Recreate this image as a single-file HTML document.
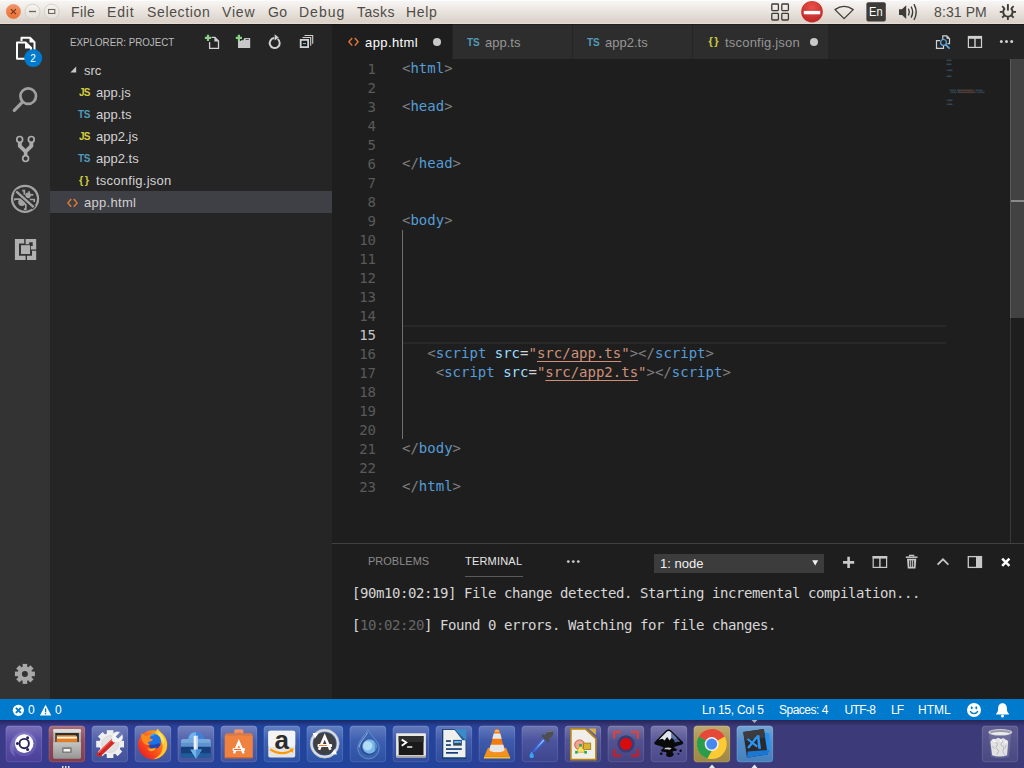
<!DOCTYPE html>
<html lang="en">
<head>
<meta charset="utf-8">
<title>app.html - project - Visual Studio Code</title>
<style>
*{box-sizing:border-box;margin:0;padding:0}
html,body{width:1024px;height:768px;overflow:hidden;background:#1e1e1e}
body{position:relative;font-family:"Liberation Sans",sans-serif;color:#ccc}
.a{position:absolute}
.t{position:absolute;white-space:pre;line-height:20px;height:20px}
svg{position:absolute;overflow:visible}
/* top panel */
#top{left:0;top:0;width:1024px;height:24px;background:linear-gradient(#fff 0,#f6f5f3 5%,#f3efec 20%,#e8e3dd 50%,#dad1c8 93%,#e5dbd2 97%)}
#top .t{font-size:14px;color:#4f4c47;top:2px;letter-spacing:0.4px}
.wb{position:absolute;top:4px;width:16px;height:16px;border-radius:50%}
/* activity bar */
#act{left:0;top:24px;width:50px;height:675px;background:#333}
#side{left:50px;top:24px;width:282px;height:675px;background:#252526}
#side .t{font-size:13px;color:#d2d2d2}
.row{position:absolute;left:0;width:282px;height:22px}
.ic{position:absolute;font-weight:bold;font-size:10px;line-height:22px;top:1px;white-space:pre}
#tabs{left:332px;top:24px;width:692px;height:35px;background:#252526}
.tab{position:absolute;top:0;height:35px;background:#2d2d2d}
.tab .t{font-size:13px;top:9px;color:#969696}
.tab .ic{line-height:35px}
#ed{left:332px;top:59px;width:692px;height:484px;background:#1e1e1e;font-family:"DejaVu Sans Mono","Liberation Mono",monospace;font-size:14px}
.ln{position:absolute;margin-top:1px;left:0;width:44px;text-align:right;color:#5a5a5a;line-height:19px;height:19px;white-space:pre}
.cl{position:absolute;left:70px;line-height:19px;height:19px;white-space:pre;color:#d4d4d4}
.g{color:#808080}.b{color:#569cd6}.at{color:#9cdcfe}.s{color:#ce9178}.u{text-decoration:underline;text-underline-offset:3px;text-decoration-thickness:1px;text-decoration-skip-ink:none}
#panel{left:332px;top:543px;width:692px;height:156px;background:#1e1e1e;border-top:1px solid #414141}
#panel .t{font-size:11px}
.term{position:absolute;left:20px;font-family:"DejaVu Sans Mono","Liberation Mono",monospace;font-size:14px;letter-spacing:-0.43px;line-height:16px;height:16px;white-space:pre;color:#d6d6d6}
#status{left:0;top:699px;width:1024px;height:21px;background:#007acc}
#status .t{font-size:12px;color:#fff;top:1px}
#dock{left:0;top:720px;width:1024px;height:48px;background:linear-gradient(90deg,#3a3a88 0,#363b90 60px,#2c4098 150px,#21449c 260px,#24439b 440px,#2d3f94 510px,#373b84 570px,#3c3a78 640px)}
.tile{position:absolute;top:6px;width:36px;height:36px;border-radius:3px;background:#4a4a8c;overflow:hidden}
</style>
</head>
<body>
<!-- ===== Ubuntu top panel ===== -->
<div id="top" class="a">

  <svg width="1024" height="24" viewBox="0 0 1024 24" style="left:0;top:0">
    <defs>
      <linearGradient id="gc" x1="0" y1="0" x2="0" y2="1"><stop offset="0" stop-color="#f29468"/><stop offset="1" stop-color="#ee6f2f"/></linearGradient>
      <linearGradient id="gb" x1="0" y1="0" x2="0" y2="1"><stop offset="0" stop-color="#f6f4f1"/><stop offset="1" stop-color="#e2ded8"/></linearGradient>
      <radialGradient id="gr" cx="0.5" cy="0.3" r="0.8"><stop offset="0" stop-color="#e8524a"/><stop offset="1" stop-color="#b81f1f"/></radialGradient>
    </defs>
    <!-- window buttons -->
    <circle cx="13.400" cy="11.600" r="7.200" fill="url(#gc)" stroke="#e08a62" stroke-width="0.600"/>
    <path d="M10.900 9.100l5 5M15.900 9.100l-5 5" stroke="#6e3a1c" stroke-width="1.200" fill="none"/>
    <circle cx="32.500" cy="11.600" r="7.500" fill="url(#gb)" stroke="#cfc8c0" stroke-width="0.800"/>
    <path d="M29 11.500h7" stroke="#6a645c" stroke-width="1.300"/>
    <circle cx="51.600" cy="11.600" r="7.500" fill="url(#gb)" stroke="#cfc8c0" stroke-width="0.800"/>
    <rect x="48.600" y="9.500" width="6.200" height="3.900" fill="#f6f4f1" stroke="#6a645c" stroke-width="1.100"/>
    <!-- grid -->
    <g fill="none" stroke="#3c3b38" stroke-width="1.3">
      <rect x="771.8" y="4" width="6.6" height="6.6" rx="0.8"/><rect x="781.8" y="4" width="6.6" height="6.6" rx="0.8"/>
      <rect x="771.8" y="13.4" width="6.6" height="6.6" rx="0.8"/><rect x="781.8" y="13.4" width="6.6" height="6.6" rx="0.8"/>
    </g>
    <!-- no entry -->
    <circle cx="812" cy="11.7" r="10.8" fill="url(#gr)"/>
    <rect x="803.8" y="10.9" width="16.4" height="3.4" fill="#fff"/>
    <!-- wifi outline -->
    <path d="M844.1 18.6L835 9.6Q844.1 3 853.2 9.6Z" fill="none" stroke="#3c3b38" stroke-width="1.3" stroke-linejoin="round"/>
    <!-- En -->
    <rect x="866.4" y="2.2" width="19.4" height="19.4" rx="2" fill="#3c3b38"/>
    <!-- speaker -->
    <path d="M899 9.2h3l4.2-4v13.8l-4.200-4h-3z" fill="#3c3b38"/>
    <g fill="none" stroke="#3c3b38" stroke-width="1.4" stroke-linecap="round">
      <path d="M908.6 9.2q1.500 2.900 0 5.800"/><path d="M911.300 7q2.700 5.100 0 10.200"/><path d="M914.200 4.700q4 7.400 0 14.800"/>
    </g>
    <!-- power gear -->
    <g transform="translate(1007.900 11.900)">
      <g fill="#3c3b38"><rect x="-0.900" y="-8.100" width="1.800" height="3" transform="rotate(45)"/><rect x="-0.900" y="-8.100" width="1.800" height="3" transform="rotate(90)"/><rect x="-0.900" y="-8.100" width="1.800" height="3" transform="rotate(135)"/><rect x="-0.900" y="-8.100" width="1.800" height="3" transform="rotate(180)"/><rect x="-0.900" y="-8.100" width="1.800" height="3" transform="rotate(225)"/><rect x="-0.900" y="-8.100" width="1.800" height="3" transform="rotate(270)"/><rect x="-0.900" y="-8.100" width="1.800" height="3" transform="rotate(315)"/></g>
      <path d="M-2.900 -3.700A4.700 4.700 0 1 0 2.900 -3.700" fill="none" stroke="#3c3b38" stroke-width="1.900"/>
      <rect x="-0.950" y="-7.800" width="1.900" height="6.500" fill="#3c3b38"/>
    </g>
  </svg>
  <div class="t" style="left:869.300px;top:2px;font-size:13.500px;color:#fff;letter-spacing:0;transform:scaleX(0.82);transform-origin:0 0">En</div>
  <div class="t" style="left:71px">File</div>
  <div class="t" style="left:107px;letter-spacing:0.8px">Edit</div>
  <div class="t" style="left:147px;letter-spacing:0.65px">Selection</div>
  <div class="t" style="left:222px;letter-spacing:0.8px">View</div>
  <div class="t" style="left:268px">Go</div>
  <div class="t" style="left:299px;letter-spacing:1px">Debug</div>
  <div class="t" style="left:357px">Tasks</div>
  <div class="t" style="left:406px;letter-spacing:0.7px">Help</div>
  <div class="t" style="left:934px;letter-spacing:0.1px">8:31 PM</div>
</div>
<!-- ===== Activity bar ===== -->
<div id="act" class="a">
  <svg width="50" height="675" viewBox="0 24 50 675" style="left:0;top:0">
    <!-- files -->
    <g fill="none" stroke="#fff" stroke-width="2" stroke-linejoin="round">
      <path d="M21.500 41v-3.200h8.500l4.500 4.500v11.200h-3"/>
      <path d="M17 42.600h8.800l5.200 5.200v11h-14z" fill="#333"/>
    </g>
    <path d="M25 42v6.500h6.500z" fill="#fff"/>
    <path d="M29.500 37.500v5h5z" fill="#fff"/>
    <circle cx="33.200" cy="58.100" r="9" fill="#007acc"/>
    <!-- search -->
    <circle cx="28.200" cy="96.100" r="7.800" fill="none" stroke="#a0a0a0" stroke-width="2.700"/>
    <path d="M22.400 102.200L14.300 110.300" stroke="#a0a0a0" stroke-width="3.300" stroke-linecap="round"/>
    <!-- git -->
    <path d="M17.900 142.300h3.900v3l3.800 3.700 3.800-3.700v-3h3.900v4.400l-5.900 5.700v3.600h-3.600v-3.600l-5.900-5.700z" fill="#acacac"/>
    <g fill="#333" stroke="#acacac" stroke-width="1.700">
      <circle cx="19.700" cy="139.400" r="2.900"/><circle cx="31.300" cy="139.400" r="2.900"/><circle cx="25.600" cy="158.600" r="2.900"/>
    </g>
    <!-- debug -->
    <g stroke="#a3a3a3" fill="none">
      <circle cx="25.050" cy="198.800" r="13" stroke-width="2.300"/>
      <g stroke-width="1.700">
        <path d="M22.300 190.700h2v4"/><path d="M14.900 200.500v-1.400h6.500"/><path d="M29.800 199.500h4.400v2.400"/><path d="M25.800 203.500v5.700h-1.900"/><path d="M30.200 194.800h3.200"/><path d="M28.800 191.300l0.800 2.200"/>
      </g>
      <circle cx="21.900" cy="202.300" r="3.700" fill="#a3a3a3" stroke="none"/>
      <circle cx="28" cy="195.400" r="2.800" fill="#a3a3a3" stroke="none"/>
      <path d="M15.600 190.800L34.300 207.800" stroke="#333" stroke-width="4.600"/>
      <path d="M16.200 191.400L33.700 207.200" stroke-width="2.400"/>
    </g>
    <!-- extensions -->
    <g fill="#b0b0b0">
      <path d="M14.900 238.900h9.300v4.600h-5.200v12.200h6.600v4.300h-10.700z"/>
      <path d="M25.600 238.900h10.600v10.700h-5.400v-3.700h1.900v-3.600h-3.500v1.900h-3.600z"/>
      <path d="M27 255.700h5v-4.900h4.200v9.200h-9.200z"/>
      <rect x="21" y="245.200" width="9" height="8.800"/>
    </g>
    <!-- gear -->
    <g transform="translate(24.900 673.900)" fill="#a8a8a8">
      <rect x="-2.300" y="-10" width="4.600" height="20"/><rect x="-2.300" y="-10" width="4.600" height="20" transform="rotate(45)"/><rect x="-2.300" y="-10" width="4.600" height="20" transform="rotate(90)"/><rect x="-2.300" y="-10" width="4.600" height="20" transform="rotate(135)"/>
      <circle r="7.300"/>
      <circle r="3" fill="#333"/>
    </g>
  </svg>
  <div class="t" style="left:30.200px;top:24.600px;font-size:10px;color:#fff;line-height:20px">2</div>
</div>
<!-- ===== Sidebar ===== -->
<div id="side" class="a">
  <svg width="282" height="675" viewBox="50 24 282 675" style="left:0;top:0">
    <!-- new file -->
    <path d="M209.600 42v6.400h8.900v-7.400l-3.600-3.600h-3.400" fill="none" stroke="#d0d0d0" stroke-width="1.300"/>
    <path d="M214.400 37v4.600h4.600z" fill="#d0d0d0"/>
    <path d="M204.900 37.900h6.200M208 34.800v6.200" stroke="#89d185" stroke-width="2.200"/>
    <!-- new folder -->
    <path d="M238 40.200h5.200l1.200-2.300h5.800v10h-12.200z" fill="#c8c8c8"/>
    <rect x="245.600" y="38.900" width="3.200" height="0.800" fill="#252526"/>
    <path d="M235.800 37.900h6.200M238.900 34.800v6.200" stroke="#252526" stroke-width="4"/>
    <path d="M235.800 37.900h6.200M238.900 34.800v6.200" stroke="#89d185" stroke-width="2.200"/>
    <!-- refresh -->
    <path d="M277.600 39a5 5 0 1 1-3.300-0.900" fill="none" stroke="#d0d0d0" stroke-width="2"/>
    <path d="M274.600 34.300l4.200 3.100-4.200 3.100z" fill="#d0d0d0"/>
    <!-- collapse all -->
    <path d="M304.500 35.500h8.200v8.200" fill="none" stroke="#d0d0d0" stroke-width="1.100"/>
    <path d="M302.500 37.500h8.200v8.200" fill="none" stroke="#d0d0d0" stroke-width="1.100"/>
    <rect x="300.700" y="39.900" width="7.400" height="7.200" fill="#1a1a1a" stroke="#d0d0d0" stroke-width="1.800"/>
    <rect x="303" y="43" width="3" height="1.100" fill="#5fc0f0"/>
    <!-- twistie -->
    <path d="M76.200 66.600v5.800h-5.800z" fill="#c8c8c8"/>
  </svg>
  <div class="t" style="left:20px;top:8px;font-size:11px;color:#bbb;transform:scaleX(0.888);transform-origin:0 0">EXPLORER: PROJECT</div>
  <div class="row" style="top:35px"><div class="t" style="left:34px;top:2px">src</div></div>
  <div class="row" style="top:57px"><span class="ic" style="left:29px;color:#d6cd3e;letter-spacing:-0.900px">JS</span><div class="t" style="left:46px;top:2px">app.js</div></div>
  <div class="row" style="top:79px"><span class="ic" style="left:28px;color:#519aba;letter-spacing:-0.300px">TS</span><div class="t" style="left:46px;top:2px">app.ts</div></div>
  <div class="row" style="top:101px"><span class="ic" style="left:29px;color:#d6cd3e;letter-spacing:-0.900px">JS</span><div class="t" style="left:46px;top:2px">app2.js</div></div>
  <div class="row" style="top:123px"><span class="ic" style="left:28px;color:#519aba;letter-spacing:-0.300px">TS</span><div class="t" style="left:46px;top:2px">app2.ts</div></div>
  <div class="row" style="top:145px"><span class="ic" style="left:29px;color:#cbcb41;font-size:11px;letter-spacing:1.500px;top:0">{}</span><div class="t" style="left:46px;top:2px;letter-spacing:0.25px">tsconfig.json</div></div>
  <div class="row" style="top:167px;background:#3f3f46"><svg width="12" height="10" viewBox="0 0 12 10" style="left:16.500px;top:6.800px"><path d="M4.200 1L0.900 4.900l3.300 3.900M6.800 1l3.300 3.900-3.300 3.900" fill="none" stroke="#e37933" stroke-width="1.400"/></svg><div class="t" style="left:34px;top:2px;letter-spacing:0.3px">app.html</div></div>
</div>
<!-- ===== Tabs ===== -->
<div id="tabs" class="a">
  <svg width="692" height="35" viewBox="332 24 692 35" style="left:0;top:0">
    <path d="M942.800 40v-4.100h4l2.700 2.700v5h-2" fill="none" stroke="#d0d0d0" stroke-width="1.200"/>
    <path d="M946.500 35.500v3.300h3.300z" fill="#d0d0d0"/>
    <path d="M940 40.700h-3.500v7.700h7v-2.500" fill="none" stroke="#d0d0d0" stroke-width="1.200"/>
    <circle cx="943.500" cy="42.400" r="2.900" fill="none" stroke="#5fb0ec" stroke-width="1.200"/>
    <path d="M945.600 44.600l4 4" stroke="#5fb0ec" stroke-width="1.500"/>
    <rect x="968.400" y="36.500" width="13.100" height="10.900" fill="none" stroke="#d0d0d0" stroke-width="1.200"/>
    <rect x="968" y="36" width="14" height="2.800" fill="#d0d0d0"/>
    <rect x="974.300" y="37" width="1.400" height="10.500" fill="#d0d0d0"/>
    <circle cx="1001.300" cy="41.600" r="1.500" fill="#d0d0d0"/><circle cx="1006.500" cy="41.600" r="1.500" fill="#d0d0d0"/><circle cx="1011.700" cy="41.600" r="1.500" fill="#d0d0d0"/>
  </svg>
  <div class="tab" style="left:0;width:120px;background:#1e1e1e"><svg width="12" height="10" viewBox="0 0 12 10" style="left:15.700px;top:13.200px"><path d="M4.200 1L0.900 4.800l3.300 3.800M6.800 1l3.300 3.800-3.300 3.800" fill="none" stroke="#e37933" stroke-width="1.400"/></svg><div class="t" style="left:33px;color:#fff;letter-spacing:0.4px">app.html</div><div class="a" style="left:100.800px;top:13.900px;width:8.400px;height:8.400px;border-radius:50%;background:#c8c8c8"></div></div>
  <div class="tab" style="left:121px;width:119px"><span class="ic" style="left:14px;color:#519aba">TS</span><div class="t" style="left:32px">app.ts</div></div>
  <div class="tab" style="left:241px;width:119px"><span class="ic" style="left:14px;color:#519aba">TS</span><div class="t" style="left:32px">app2.ts</div></div>
  <div class="tab" style="left:361px;width:135px"><span class="ic" style="left:15.500px;color:#cbcb41;font-size:11px;letter-spacing:1.500px;top:0">{}</span><div class="t" style="left:32px;letter-spacing:0.2px">tsconfig.json</div><div class="a" style="left:116.800px;top:13.900px;width:8.400px;height:8.400px;border-radius:50%;background:#c8c8c8"></div></div>
</div>
<!-- ===== Editor ===== -->
<div id="ed" class="a">
  <div class="a" style="left:71px;top:266px;width:543px;height:19px;border:2px solid #282828;border-left:0;border-right:0"></div>
  <div class="a" style="left:70px;top:171px;width:1px;height:209px;background:#707070"></div>
  <div class="ln" style="top:0">1</div><div class="cl" style="top:0"><span class="g">&lt;</span><span class="b">html</span><span class="g">&gt;</span></div>
  <div class="ln" style="top:19px">2</div>
  <div class="ln" style="top:38px">3</div><div class="cl" style="top:38px"><span class="g">&lt;</span><span class="b">head</span><span class="g">&gt;</span></div>
  <div class="ln" style="top:57px">4</div>
  <div class="ln" style="top:76px">5</div>
  <div class="ln" style="top:95px">6</div><div class="cl" style="top:95px"><span class="g">&lt;/</span><span class="b">head</span><span class="g">&gt;</span></div>
  <div class="ln" style="top:114px">7</div>
  <div class="ln" style="top:133px">8</div>
  <div class="ln" style="top:152px">9</div><div class="cl" style="top:152px"><span class="g">&lt;</span><span class="b">body</span><span class="g">&gt;</span></div>
  <div class="ln" style="top:171px">10</div>
  <div class="ln" style="top:190px">11</div>
  <div class="ln" style="top:209px">12</div>
  <div class="ln" style="top:228px">13</div>
  <div class="ln" style="top:247px">14</div>
  <div class="ln" style="top:266px;color:#c6c6c6">15</div>
  <div class="ln" style="top:285px">16</div><div class="cl" style="top:285px">   <span class="g">&lt;</span><span class="b">script</span> <span class="at">src</span>=<span class="s">"<span class="u">src/app.ts</span>"</span><span class="g">&gt;&lt;/</span><span class="b">script</span><span class="g">&gt;</span></div>
  <div class="ln" style="top:304px">17</div><div class="cl" style="top:304px">    <span class="g">&lt;</span><span class="b">script</span> <span class="at">src</span>=<span class="s">"<span class="u">src/app2.ts</span>"</span><span class="g">&gt;&lt;/</span><span class="b">script</span><span class="g">&gt;</span></div>
  <div class="ln" style="top:323px">18</div>
  <div class="ln" style="top:342px">19</div>
  <div class="ln" style="top:361px">20</div>
  <div class="ln" style="top:380px">21</div><div class="cl" style="top:380px"><span class="g">&lt;/</span><span class="b">body</span><span class="g">&gt;</span></div>
  <div class="ln" style="top:399px">22</div>
  <div class="ln" style="top:418px">23</div><div class="cl" style="top:418px"><span class="g">&lt;/</span><span class="b">html</span><span class="g">&gt;</span></div>
  <svg width="692" height="60" viewBox="0 0 692 60" style="left:0;top:0">
<rect x="614" y="0.5" width="1" height="1.600" fill="#808080" fill-opacity="0.16"/>
<rect x="615" y="0.5" width="4" height="1.600" fill="#569cd6" fill-opacity="0.32"/>
<rect x="619" y="0.5" width="1" height="1.600" fill="#808080" fill-opacity="0.16"/>
<rect x="614" y="4.5" width="1" height="1.600" fill="#808080" fill-opacity="0.16"/>
<rect x="615" y="4.5" width="4" height="1.600" fill="#569cd6" fill-opacity="0.32"/>
<rect x="619" y="4.5" width="1" height="1.600" fill="#808080" fill-opacity="0.16"/>
<rect x="614" y="10.5" width="2" height="1.600" fill="#808080" fill-opacity="0.16"/>
<rect x="616" y="10.5" width="4" height="1.600" fill="#569cd6" fill-opacity="0.32"/>
<rect x="620" y="10.5" width="1" height="1.600" fill="#808080" fill-opacity="0.16"/>
<rect x="614" y="16.5" width="1" height="1.600" fill="#808080" fill-opacity="0.16"/>
<rect x="615" y="16.5" width="4" height="1.600" fill="#569cd6" fill-opacity="0.32"/>
<rect x="619" y="16.5" width="1" height="1.600" fill="#808080" fill-opacity="0.16"/>
<rect x="614" y="40.5" width="2" height="1.600" fill="#808080" fill-opacity="0.16"/>
<rect x="616" y="40.5" width="4" height="1.600" fill="#569cd6" fill-opacity="0.32"/>
<rect x="620" y="40.5" width="1" height="1.600" fill="#808080" fill-opacity="0.16"/>
<rect x="614" y="44.5" width="2" height="1.600" fill="#808080" fill-opacity="0.16"/>
<rect x="616" y="44.5" width="4" height="1.600" fill="#569cd6" fill-opacity="0.32"/>
<rect x="620" y="44.5" width="1" height="1.600" fill="#808080" fill-opacity="0.16"/>
<rect x="617" y="30.5" width="1" height="1.600" fill="#808080" fill-opacity="0.16"/>
<rect x="618" y="30.5" width="6" height="1.600" fill="#569cd6" fill-opacity="0.25"/>
<rect x="625" y="30.5" width="3" height="1.600" fill="#9cdcfe" fill-opacity="0.22"/>
<rect x="628" y="30.5" width="1" height="1.600" fill="#d4d4d4" fill-opacity="0.18"/>
<rect x="629" y="30.5" width="12" height="1.600" fill="#ce9178" fill-opacity="0.27"/>
<rect x="641" y="30.5" width="3" height="1.600" fill="#808080" fill-opacity="0.16"/>
<rect x="644" y="30.5" width="6" height="1.600" fill="#569cd6" fill-opacity="0.25"/>
<rect x="650" y="30.5" width="1" height="1.600" fill="#808080" fill-opacity="0.16"/>
<rect x="618" y="32.5" width="1" height="1.600" fill="#808080" fill-opacity="0.16"/>
<rect x="619" y="32.5" width="6" height="1.600" fill="#569cd6" fill-opacity="0.25"/>
<rect x="626" y="32.5" width="3" height="1.600" fill="#9cdcfe" fill-opacity="0.22"/>
<rect x="629" y="32.5" width="1" height="1.600" fill="#d4d4d4" fill-opacity="0.18"/>
<rect x="630" y="32.5" width="13" height="1.600" fill="#ce9178" fill-opacity="0.27"/>
<rect x="643" y="32.5" width="3" height="1.600" fill="#808080" fill-opacity="0.16"/>
<rect x="646" y="32.5" width="6" height="1.600" fill="#569cd6" fill-opacity="0.25"/>
<rect x="652" y="32.5" width="1" height="1.600" fill="#808080" fill-opacity="0.16"/>
  </svg>
  <!-- scrollbar -->
  <div class="a" style="left:678px;top:0;width:1px;height:484px;background:#383838"></div>
  <div class="a" style="left:678px;top:0;width:14px;height:259px;background:#424242;border-left:1px solid #5a5a55"></div>
  <div class="a" style="left:679px;top:141px;width:13px;height:2px;background:#8a8a88"></div>
</div>
<!-- ===== Panel ===== -->
<div id="panel" class="a">
  <div class="a" style="left:322px;top:10px;width:170px;height:19px;background:#3c3c3c"></div>
  <svg width="692" height="156" viewBox="332 543 692 156" style="left:0;top:-1px">
    <circle cx="568.300" cy="561.600" r="1.400" fill="#c8c8c8"/><circle cx="573.300" cy="561.600" r="1.400" fill="#c8c8c8"/><circle cx="578.300" cy="561.600" r="1.400" fill="#c8c8c8"/>
    <path d="M812.200 560.300h6l-3 5.300z" fill="#f0f0f0"/>
    <path d="M843 562.400h11.200M848.600 556.800v11.200" stroke="#c8c8c8" stroke-width="2.600"/>
    <rect x="873.200" y="556.600" width="13.400" height="10.800" fill="none" stroke="#c8c8c8" stroke-width="1.200"/>
    <rect x="872.600" y="556" width="14.600" height="2.600" fill="#c8c8c8"/>
    <rect x="879.200" y="557" width="1.400" height="10.500" fill="#c8c8c8"/>
    <path d="M907 558.800h9.300l-0.800 9.800h-7.700z" fill="#c8c8c8"/>
    <path d="M905.800 557.200h11.700" stroke="#c8c8c8" stroke-width="1.500"/>
    <path d="M909.600 556.600v-1.300h4.100v1.300" fill="none" stroke="#c8c8c8" stroke-width="1.200"/>
    <path d="M909.700 560.300v6.500M911.650 560.300v6.500M913.600 560.300v6.500" stroke="#1e1e1e" stroke-width="0.900"/>
    <path d="M937.600 564.700l5.400-5.400 5.400 5.400" fill="none" stroke="#c8c8c8" stroke-width="1.700"/>
    <rect x="968.300" y="556.600" width="13.200" height="10.800" fill="none" stroke="#c8c8c8" stroke-width="1.300"/>
    <rect x="976" y="556.600" width="5.600" height="10.800" fill="#c8c8c8"/>
    <path d="M1002.200 558.600l7.200 7.200M1009.400 558.600l-7.200 7.200" stroke="#fff" stroke-width="2.500"/>
  </svg>
  <div class="t" style="left:36px;top:7px;color:#8b8b8b">PROBLEMS</div>
  <div class="t" style="left:133px;top:7px;color:#e7e7e7;letter-spacing:0.2px">TERMINAL</div>
  <div class="a" style="left:133px;top:32px;width:58px;height:1px;background:#5a5a5a"></div>
  <div class="t" style="left:328px;top:10px;font-size:13px;color:#f0f0f0">1: node</div>
  <div class="term" style="top:41px">[90m10:02:19] File change detected. Starting incremental compilation...</div>
  <div class="term" style="top:73px">[<span style="color:#666">10:02:20</span>] Found 0 errors. Watching for file changes.</div>
</div>
<div class="a" style="left:0;top:24px;width:1024px;height:1px;background:rgba(0,0,0,0.28)"></div>
<!-- ===== Status bar ===== -->
<div id="status" class="a">
  <svg width="1024" height="21" viewBox="0 699 1024 21" style="left:0;top:0">
    <circle cx="18.400" cy="710.300" r="5.600" fill="#fff"/>
    <path d="M15.900 707.800l5 5M20.900 707.800l-5 5" stroke="#007acc" stroke-width="1.900"/>
    <path d="M45.600 704.800l5.700 10.700h-11.400z" fill="#fff"/>
    <path d="M45.600 708.300v4" stroke="#007acc" stroke-width="1.300"/><circle cx="45.600" cy="713.800" r="0.750" fill="#007acc"/>
    <circle cx="974" cy="710" r="7" fill="#fff"/>
    <ellipse cx="971.700" cy="707.700" rx="0.950" ry="1.500" fill="#007acc"/><ellipse cx="976.300" cy="707.700" rx="0.950" ry="1.500" fill="#007acc"/>
    <path d="M970 711.300q4 4.600 8 0" fill="none" stroke="#007acc" stroke-width="1.300"/>
    <path d="M1002.500 703.300c-3.300 0-4.400 2.600-4.400 5.400c0 2.600-0.800 3.800-1.900 4.900v0.900h12.600v-0.900c-1.100-1.100-1.900-2.300-1.900-4.900c0-2.800-1.100-5.400-4.400-5.400z" fill="#fff"/>
    <circle cx="1002.500" cy="716" r="1.500" fill="#fff"/>
  </svg>
  <div class="t" style="left:28px">0</div>
  <div class="t" style="left:55px">0</div>
  <div class="t" style="left:702px;letter-spacing:-0.25px">Ln 15, Col 5</div>
  <div class="t" style="left:779px;letter-spacing:-0.5px">Spaces: 4</div>
  <div class="t" style="left:844.500px;letter-spacing:-0.65px">UTF-8</div>
  <div class="t" style="left:891px;letter-spacing:-0.8px">LF</div>
  <div class="t" style="left:918px;letter-spacing:0">HTML</div>
</div>
<!-- ===== Dock ===== -->
<div id="dock" class="a">
  <div class="a" style="left:0;top:0;width:1024px;height:6px;background:linear-gradient(rgba(20,18,60,0.55),rgba(20,18,60,0))"></div>
<!--DOCKSVG-->
<svg width="1024" height="48" viewBox="0 0 1024 48" style="left:0;top:0">
  <defs><linearGradient id="tg" x1="0" y1="0" x2="0" y2="1"><stop offset="0" stop-color="#fff" stop-opacity="0.240"/><stop offset="0.400" stop-color="#fff" stop-opacity="0.060"/><stop offset="1" stop-color="#000" stop-opacity="0.060"/></linearGradient><linearGradient id="tg2" x1="0" y1="0" x2="0" y2="1"><stop offset="0" stop-color="#fff" stop-opacity="0.130"/><stop offset="1" stop-color="#fff" stop-opacity="0.030"/></linearGradient><linearGradient id="cab" x1="0" y1="0" x2="0" y2="1"><stop offset="0" stop-color="#c4c4c2"/><stop offset="1" stop-color="#969694"/></linearGradient><linearGradient id="ff1" x1="0.900" y1="0.100" x2="0.150" y2="0.850"><stop offset="0" stop-color="#ffb01c"/><stop offset="0.450" stop-color="#ff6a1a"/><stop offset="1" stop-color="#ec2424"/></linearGradient></defs>
  <g transform="translate(5.7 5.800)">
    <rect width="36.400" height="36.400" rx="3.500" fill="#5044a2"/>
    <rect width="36.400" height="36.400" rx="3.500" fill="url(#tg)"/>
    <rect x="0.500" y="0.500" width="35.400" height="35.400" rx="3" fill="none" stroke="#fff" stroke-opacity="0.100"/>
    <path d="M4 22c0-9 8-16 16-15c6 1 10 5 11 10c-2-4-6-6-10-6c-8 0-13 6-13 13c0 3 1 5 2 7c-4-2-6-5-6-9z" fill="#a8a0dc" fill-opacity="0.350"/>
    <circle cx="18.500" cy="17.800" r="12.500" fill="#9088cc" fill-opacity="0.300"/>
    <circle cx="18.500" cy="17.800" r="9.300" fill="#fff"/>
    <circle cx="18.500" cy="17.800" r="4.700" fill="none" stroke="#2a2260" stroke-width="1.900"/>
    <circle cx="11.700" cy="17.800" r="1.500" fill="#2a2260"/><circle cx="21.900" cy="11.900" r="1.500" fill="#2a2260"/><circle cx="21.900" cy="23.700" r="1.500" fill="#2a2260"/>
  </g>

  <g transform="translate(48.7 5.800)">
    <rect width="36.400" height="36.400" rx="3.500" fill="#8a4152"/>
    <rect width="36.400" height="36.400" rx="3.500" fill="url(#tg)"/>
    <rect x="0.500" y="0.500" width="35.400" height="35.400" rx="3" fill="none" stroke="#fff" stroke-opacity="0.100"/>
    <rect x="4.600" y="3.200" width="27.600" height="29.600" rx="1.500" fill="url(#cab)"/>
    <rect x="4.600" y="3.200" width="27.600" height="3.200" rx="1" fill="#dcdcda"/>
    <rect x="6.600" y="7.200" width="23.600" height="9.300" fill="#2e2e2e"/>
    <path d="M8 9.500h19l1.500 1.500v5.500h-20.500z" fill="#e8963a"/>
    <rect x="8.300" y="11" width="19.800" height="1.700" fill="#fbf3e4"/>
    <rect x="8" y="13.200" width="20.500" height="3.300" fill="#e07c28"/>
    <rect x="4.600" y="16.500" width="27.600" height="16.300" rx="1" fill="url(#cab)"/>
    <rect x="13.300" y="21.500" width="9.800" height="5.800" rx="1.200" fill="#7e7e7c"/>
    <rect x="14.900" y="23.100" width="6.600" height="2.600" rx="0.500" fill="#f4f4f4"/>
  </g>

  <g transform="translate(91.7 5.800)">
    <rect width="36.400" height="36.400" rx="3.500" fill="#4657a4"/>
    <rect width="36.400" height="36.400" rx="3.500" fill="url(#tg)"/>
    <rect x="0.500" y="0.500" width="35.400" height="35.400" rx="3" fill="none" stroke="#fff" stroke-opacity="0.100"/>
    <g transform="translate(18.400 18.300)" fill="#efefee">
      <rect x="-3.300" y="-13.900" width="6.600" height="27.800"/><rect x="-3.300" y="-13.900" width="6.600" height="27.800" transform="rotate(45)"/><rect x="-3.300" y="-13.900" width="6.600" height="27.800" transform="rotate(90)"/><rect x="-3.300" y="-13.900" width="6.600" height="27.800" transform="rotate(135)"/>
      <circle r="10.800"/><circle r="8.400" fill="#e2e2e2" stroke="#d4d4d4" stroke-width="0.800"/>
    </g>
    <path d="M7.400 28.600L21 15.600" stroke="#d42828" stroke-width="4.800" stroke-linecap="round"/>
    <path d="M6.800 27L19.800 14.600" stroke="#ee5a4a" stroke-width="1.300" stroke-linecap="round"/>
    <circle cx="7.800" cy="28.300" r="0.900" fill="#7a1414"/>
    <circle cx="25.600" cy="11.400" r="5.500" fill="#f6f6f6" stroke="#cfcfcf" stroke-width="0.500"/>
    <path d="M25.200 11.800l5-5" stroke="#6a78b8" stroke-width="3.400"/>
    <path d="M21 15.600l2.500-2.500" stroke="#f0f0f0" stroke-width="3.600"/>
  </g>

  <g transform="translate(134.7 5.800)">
    <rect width="36.400" height="36.400" rx="3.500" fill="#4659a8"/>
    <rect width="36.400" height="36.400" rx="3.500" fill="url(#tg)"/>
    <rect x="0.500" y="0.500" width="35.400" height="35.400" rx="3" fill="none" stroke="#fff" stroke-opacity="0.100"/>
    <circle cx="18" cy="19" r="14.600" fill="url(#ff1)"/>
    <path d="M20 7c0.800-1.500 2.300-3 3.200-4.400c1.200 2.800 4.500 4.800 6.500 8c3.300 5 3.500 11.500 0.300 16.400c-2.700 4-7 6.200-11.500 6.500c6-2.200 10-7.500 9.500-13.500c-0.400-5.500-5.500-8-8-13z" fill="#ffc830"/>
    <path d="M24 6c3 2 5 5 5.500 8.500c0.300 2-0.500 4-0.500 4c-1-4-4-6-5.500-9z" fill="#ffe060"/>
    <circle cx="19.400" cy="15.200" r="6.900" fill="#1d72e8"/>
    <path d="M13 17.500c2 1.500 5 2 7.500 1c2-0.800 3.500-1 5.500-0.500c-0.800 3.500-4 5.700-7.500 5.300c-3-0.300-5-2.500-5.500-5.800z" fill="#2744b4"/>
    <path d="M14.500 9.500q3-2.500 7-1.500q-2 0.500-3 2z" fill="#38b0f4"/>
    <path d="M6.800 7.500c1.500 0.500 3 1.500 4 2.800c2-1.200 4.500-1.500 6.500-0.800c-1.200 0.800-2 1.800-2.300 3l3.300 1.200c-1 1.500-3 2.300-5 2.300c0 1.500 1 2.800 2.500 3.300c-3 0.800-6.500-0.500-8-3.500c-1.300-2.600-1.500-5.800-1-8.300z" fill="#ff8a1c"/>
    <path d="M12.500 22.200c2.500 1.200 6 1 9-0.700c-0.500 2-2 3.300-4 3.800c-2 0.500-4-0.800-5-3.100z" fill="#ffab20"/>
  </g>

  <g transform="translate(177.7 5.800)">
    <rect width="36.400" height="36.400" rx="3.500" fill="#4659a8"/>
    <rect width="36.400" height="36.400" rx="3.500" fill="url(#tg)"/>
    <rect x="0.500" y="0.500" width="35.400" height="35.400" rx="3" fill="none" stroke="#fff" stroke-opacity="0.100"/>
    <circle cx="18.300" cy="15" r="8.700" fill="#3c82dc"/>
    <path d="M10.500 13a8.500 8.500 0 0 1 7.800-6.700v7z" fill="#7cbcf2" fill-opacity="0.800"/>
    <path d="M4.500 13.200h27.600l0.900 1.500v6.300h-29.800v-6.300z" fill="#78a8da"/>
    <path d="M3.200 17h29.800v4h-29.800z" fill="#5c94d0"/>
    <path d="M3.200 20.900h29.800v9.600q0 1-1 1h-27.800q-1 0-1-1z" fill="#173f7c"/>
    <path d="M3.200 27.500h29.800v3q0 1-1 1h-27.800q-1 0-1-1z" fill="#1f5c9c"/>
    <rect x="16" y="10" width="4" height="14.500" fill="#eef3fa"/>
    <rect x="18.600" y="10" width="1.400" height="14.500" fill="#b8d0ec"/>
    <path d="M12.400 23.800h11.800l-5.900 9.200z" fill="#74b4ea"/>
    <path d="M18.300 23.800h5.900l-5.900 9.200z" fill="#4c90d4"/>
  </g>

  <g transform="translate(220.7 5.800)">
    <rect width="36.400" height="36.400" rx="3.500" fill="#4659a8"/>
    <rect width="36.400" height="36.400" rx="3.500" fill="url(#tg)"/>
    <rect x="0.500" y="0.500" width="35.400" height="35.400" rx="3" fill="none" stroke="#fff" stroke-opacity="0.100"/>
    <path d="M13.600 9.500v-4.500q0-1.500 1.500-1.500h6q1.500 0 1.500 1.500v4.500z" fill="#ee9468"/>
    <path d="M16 9.500v-3h4.200v3z" fill="#e07a70"/>
    <path d="M5.200 7.400h25.800l1.100 2.100h-28z" fill="#dc7838"/>
    <rect x="4" y="9.400" width="28.100" height="23" rx="0.800" fill="#f08240"/>
    <rect x="4" y="31.400" width="28.100" height="1" fill="#c8602a"/>
    <path d="M13.300 27.600l4.800-11.300 4.800 11.300" fill="none" stroke="#fff" stroke-width="2.400"/>
    <rect x="12" y="22.300" width="12.200" height="2.700" fill="#fff"/>
    <rect x="13.300" y="23.200" width="7" height="0.900" fill="#f0501a"/>
  </g>

  <g transform="translate(263.7 5.800)">
    <rect width="36.400" height="36.400" rx="3.500" fill="#3058b0"/>
    <rect width="36.400" height="36.400" rx="3.500" fill="url(#tg)"/>
    <rect x="0.500" y="0.500" width="35.400" height="35.400" rx="3" fill="none" stroke="#fff" stroke-opacity="0.100"/>
    <rect x="4.600" y="4.900" width="26.900" height="26.900" rx="1.800" fill="#e4e4e3"/>
    <rect x="4.600" y="4.900" width="26.900" height="16" rx="1.800" fill="#f4f4f3"/>
    <text x="18" y="23.200" font-family="Liberation Sans, sans-serif" font-weight="bold" font-size="26" text-anchor="middle" fill="#2c2c2c">a</text>
    <path d="M6.500 23.600q10.500 7 21.500 1.200" fill="none" stroke="#ff9900" stroke-width="2.100"/>
    <path d="M25.600 22.800l4.500-0.200-1.300 4.600z" fill="#ff9900"/>
  </g>

  <g transform="translate(306.7 5.800)">
    <rect width="36.400" height="36.400" rx="3.500" fill="#3058b0"/>
    <rect width="36.400" height="36.400" rx="3.500" fill="url(#tg)"/>
    <rect x="0.500" y="0.500" width="35.400" height="35.400" rx="3" fill="none" stroke="#fff" stroke-opacity="0.100"/>
    <circle cx="18" cy="17.800" r="13.300" fill="none" stroke="#dedede" stroke-width="2.600"/>
    <circle cx="18" cy="17.800" r="14.400" fill="none" stroke="#b0b0b0" stroke-width="0.600"/>
    <circle cx="18" cy="17.800" r="11.200" fill="#404040"/>
    <path d="M12.300 24l5.700-13.200 5.700 13.200" fill="none" stroke="#fff" stroke-width="2.600"/>
    <rect x="10.800" y="18.300" width="14.600" height="3" rx="1.200" fill="#fff"/>
    <rect x="12.200" y="19.300" width="8" height="0.900" fill="#f26a1c"/>
    <path d="M6 7.200l5.800 0.300-3.600 5.200z" fill="#fff"/><path d="M30.200 28.600l-5.800-0.300 3.600-5.200z" fill="#fff"/>
  </g>

  <g transform="translate(349.7 5.800)">
    <rect width="36.400" height="36.400" rx="3.500" fill="#3155ac"/>
    <rect width="36.400" height="36.400" rx="3.500" fill="url(#tg)"/>
    <rect x="0.500" y="0.500" width="35.400" height="35.400" rx="3" fill="none" stroke="#fff" stroke-opacity="0.100"/>
    <path d="M18 3.900c2 5 11.500 11.500 11.500 18.500a10.700 10.700 0 0 1-21.400 0c0-7 7.900-13.500 9.900-18.500z" fill="#3a64b0" stroke="#7ea6dc" stroke-width="0.800" stroke-opacity="0.800"/>
    <path d="M18 6.500c-1.500 4-8 9.500-8.500 15" fill="none" stroke="#a8c8ec" stroke-width="0.800"/>
    <circle cx="19.200" cy="21.200" r="8.200" fill="#2c4c94"/>
    <circle cx="19.800" cy="20.700" r="7.200" fill="#7ab8e8"/>
    <circle cx="18" cy="20" r="4.600" fill="#b4dcf6"/>
    <path d="M24 15c3 3 3.500 8 0.500 11.500c1.200-4 1-8-0.500-11.500z" fill="#4a88c8"/>
  </g>

  <g transform="translate(392.7 5.800)">
    <rect width="36.400" height="36.400" rx="3.500" fill="#3350a6"/>
    <rect width="36.400" height="36.400" rx="3.500" fill="url(#tg)"/>
    <rect x="0.500" y="0.500" width="35.400" height="35.400" rx="3" fill="none" stroke="#fff" stroke-opacity="0.100"/>
    <rect x="3.400" y="7.400" width="29.800" height="24.200" rx="0.800" fill="#e9e7e2"/>
    <rect x="3.400" y="29.800" width="29.800" height="1.800" fill="#a9a7a2"/>
    <rect x="6" y="10.200" width="24.800" height="19" fill="#1a1a1a"/>
    <rect x="6" y="10.200" width="24.800" height="6" fill="#2e2e2e"/>
    <path d="M9 13.600l4.600 3.200-4.600 3.200" fill="none" stroke="#fff" stroke-width="1.800"/>
    <rect x="14.400" y="20.500" width="5.200" height="1.400" fill="#fff"/>
  </g>

  <g transform="translate(435.7 5.800)">
    <rect width="36.400" height="36.400" rx="3.500" fill="#3350a6"/>
    <rect width="36.400" height="36.400" rx="3.500" fill="url(#tg)"/>
    <rect x="0.500" y="0.500" width="35.400" height="35.400" rx="3" fill="none" stroke="#fff" stroke-opacity="0.100"/>
    <path d="M6.300 3.500h13l11.200 11v18.500h-24.200z" fill="#12406e"/>
    <path d="M7.600 4.200h11.200l11 10.500v16.800h-22.200z" fill="#efefed"/>
    <path d="M18.800 3.500h11.700v11.200z" fill="#3a8cc8"/>
    <path d="M18.800 3.900l11 10.500h-3z" fill="#1c5c96"/>
    <rect x="10.300" y="14.400" width="4.900" height="1.700" fill="#12407a"/><rect x="10.300" y="18.400" width="4.900" height="1.700" fill="#12407a"/>
    <rect x="17.500" y="14.100" width="8.600" height="5.700" fill="#12407a"/><rect x="18.400" y="15" width="6.800" height="2.400" fill="#6cb4ec"/><path d="M18.400 18.900l2-2 1.500 1 1.500-1.500 1.800 2.500z" fill="#4a4a3a"/>
    <rect x="10.300" y="22.400" width="15.800" height="1.700" fill="#12407a"/><rect x="10.300" y="26.200" width="12" height="1.700" fill="#12407a"/>
  </g>

  <g transform="translate(478.7 5.800)">
    <rect width="36.400" height="36.400" rx="3.500" fill="#3350a6"/>
    <rect width="36.400" height="36.400" rx="3.500" fill="url(#tg)"/>
    <rect x="0.500" y="0.500" width="35.400" height="35.400" rx="3" fill="none" stroke="#fff" stroke-opacity="0.100"/>
    <path d="M9.300 22h18l3.900 9h-25.800z" fill="#f4901c"/>
    <path d="M5.400 31h25.800l0.300 1.700h-26.400z" fill="#ffc028"/>
    <path d="M18.300 3.300c1.200 0 1.900 0.500 2.200 1.500l5.500 20c-2 2.800-13.400 2.800-15.400 0l5.500-20c0.300-1 1-1.500 2.200-1.500z" fill="#f27c10"/>
    <path d="M15 7.800h6.600l1.400 5.200h-9.400z" fill="#e6e6e6"/>
    <path d="M11.900 19h12.800l1.300 5.500c-2 2.700-13.400 2.700-15.400 0z" fill="#e6e6e6"/>
    <path d="M16.400 4.500q1.900-1.200 3.800 0l0.500 1.600h-4.800z" fill="#f9b060"/>
  </g>

  <g transform="translate(521.7 5.800)">
    <rect width="36.400" height="36.400" rx="3.500" fill="#404a98"/>
    <rect width="36.400" height="36.400" rx="3.500" fill="url(#tg)"/>
    <rect x="0.500" y="0.500" width="35.400" height="35.400" rx="3" fill="none" stroke="#fff" stroke-opacity="0.100"/>
    <path d="M22.500 9.800l3.200-3.500c1.300-1.600 3.500-2 4.900-0.900c1.400 1.100 1.300 3.300 0 4.700l-3.500 3.300 1.200 1.600-2 2-6.800-6.800 2-2z" fill="#4e4e4e"/>
    <path d="M26 6.500c1.200-1.300 3-1.500 4-0.800" fill="none" stroke="#8a8a8a" stroke-width="1"/>
    <path d="M21 12.200l3 3-10.500 10.500-2.600 1 0.800-2.800z" fill="#3868dc"/>
    <path d="M21.500 13.600l1.200 1.200-9.500 9.500z" fill="#a8c4f8"/>
    <path d="M10 25.600c1.400 2.200 2.200 3.300 2.200 4.500a2.200 2.200 0 0 1-4.400 0c0-1.200 0.800-2.300 2.200-4.500z" fill="#36a4f4"/>
  </g>

  <g transform="translate(564.7 5.800)">
    <rect width="36.400" height="36.400" rx="3.500" fill="#474a90"/>
    <rect width="36.400" height="36.400" rx="3.500" fill="url(#tg)"/>
    <rect x="0.500" y="0.500" width="35.400" height="35.400" rx="3" fill="none" stroke="#fff" stroke-opacity="0.100"/>
    <path d="M6.200 3.100h14.500l10.500 9.800v20.900h-25z" fill="#efeeeb" stroke="#b8860e" stroke-width="1.600"/>
    <path d="M23.900 2.700h7.300v6.600z" fill="#e0b040"/>
    <circle cx="14.900" cy="19" r="4.900" fill="#f0a48e" stroke="#c8563a" stroke-width="0.900"/>
    <rect x="18.900" y="17.300" width="7.100" height="6.300" fill="#d8b42c" stroke="#9c7614" stroke-width="0.800"/>
    <path d="M15.800 19.500l5 7h-9.400z" fill="#f4e468" stroke="#c8a622" stroke-width="0.700"/>
    <rect x="14.500" y="18.200" width="2.600" height="2.600" fill="#24a850"/><rect x="10.400" y="25.200" width="2.600" height="2.600" fill="#24a850"/><rect x="19.600" y="25.200" width="2.600" height="2.600" fill="#24a850"/>
  </g>

  <g transform="translate(607.7 5.800)">
    <rect width="36.400" height="36.400" rx="3.500" fill="#48488a"/>
    <rect width="36.400" height="36.400" rx="3.500" fill="url(#tg)"/>
    <rect x="0.500" y="0.500" width="35.400" height="35.400" rx="3" fill="none" stroke="#fff" stroke-opacity="0.100"/>
    <circle cx="18.300" cy="18.100" r="8.600" fill="#3a3a74"/>
    <circle cx="18.300" cy="18.100" r="6" fill="#d80c0c"/>
    <path d="M6.500 13v-6.800h6.800M23.300 6.200h6.800v6.800" fill="none" stroke="#f03c2c" stroke-width="1.900"/>
    <path d="M30.100 23.200v6.800h-6.800M13.300 30h-6.800v-6.800" fill="none" stroke="#e41414" stroke-width="1.900"/>
  </g>

  <g transform="translate(650.7 5.800)">
    <rect width="36.400" height="36.400" rx="3.500" fill="#504e92"/>
    <rect width="36.400" height="36.400" rx="3.500" fill="url(#tg)"/>
    <rect x="0.500" y="0.500" width="35.400" height="35.400" rx="3" fill="none" stroke="#fff" stroke-opacity="0.100"/>
    <path d="M17.900 3.600c1 0 1.800 0.400 2.800 1.400l11 10.800c1.300 1.300 1 2.400-0.500 2.900l-6.500 2c-2 0.600-1 1.800 0.500 2.300c2 0.700 1 2.200-1.500 2.200c-2.500 0-2 1.500-1 2.500c1.200 1.200-1 3.500-3.500 3.500c-3 0-4.500-1.800-3.500-3.300c0.800-1.200-0.500-2-2.500-2c-3 0-4-1.700-1.500-2.700c2-0.800 1-2-1-2.500l-5.500-1.700c-1.800-0.600-2-2-0.700-3.300l10.600-10.700c1-1 1.800-1.400 2.800-1.400z" fill="#0a0a0a"/>
    <path d="M17.900 5.200c0.800 0 1.400 0.400 2.100 1.100l6.200 6.200-2.700 1.500-2.500-2.200-2 2.800-2.600-3.400-2.500 3.400-2.200-1.600-3.500 1 7.600-7.700c0.700-0.700 1.300-1.100 2.100-1.100z" fill="#dfe3ea"/>
    <path d="M20.500 6.800l9 8.900-5.500 1-1-3.200-2.500-2z" fill="#4a66a4" fill-opacity="0.900"/>
    <path d="M14 22.200c2-0.800 5-0.800 7 0.300l-2 1.500c-1.500-0.800-3.500-0.800-5-0.300z" fill="#c8c8c8"/>
    <circle cx="10.500" cy="28" r="1.300" fill="#0a0a0a"/><circle cx="29.900" cy="25" r="1.200" fill="#0a0a0a"/><circle cx="27.800" cy="28" r="0.900" fill="#0a0a0a"/>
  </g>

  <g transform="translate(693.7 5.800)">
    <rect width="36.400" height="36.400" rx="3.500" fill="#a89048"/>
    <rect width="36.400" height="36.400" rx="3.500" fill="url(#tg)"/>
    <rect x="0.500" y="0.500" width="35.400" height="35.400" rx="3" fill="none" stroke="#fff" stroke-opacity="0.100"/>
    <circle cx="18" cy="18.300" r="15" fill="#fccb34"/>
    <path d="M18 18.300L5 10.800a15 15 0 0 1 26 0z" fill="#e4493a"/>
    <path d="M18 3.300a15 15 0 0 1 13 7.500h-13z" fill="#e4493a"/>
    <path d="M5 10.800a15 15 0 0 0 8.700 21.900l7-12.400-2.700-2z" fill="#2a9c4c"/>
    <path d="M5 10.800l7 12.200 6-4.700z" fill="#2a9c4c"/>
    <circle cx="18" cy="18.300" r="7" fill="#f2f2f2"/>
    <circle cx="18" cy="18.300" r="5.500" fill="#4688f0"/>
  </g>

  <g transform="translate(736.7 5.800)">
    <rect width="36.400" height="36.400" rx="3.500" fill="#4a88c8"/>
    <rect width="36.400" height="36.400" rx="3.500" fill="url(#tg)"/>
    <rect x="0.500" y="0.500" width="35.400" height="35.400" rx="3" fill="none" stroke="#fff" stroke-opacity="0.100"/>
    <path d="M24.500 6l8.200 1.800 0.400 16.300-3.900 6.400-4.500-0.500z" fill="#2492f0"/>
    <path d="M6.500 6.200l20.600-3 3.900 25.400-20.700 3.400z" fill="#2a2a2c"/>
    <path d="M6.500 6.200l20.600-3 1.300 8.500-20.400 3z" fill="#3c3c3e"/>
    <path d="M11 25.600l20.600-1.400 1.500 0-2.100 4.400-20.700 3.400z" fill="#1a78d4"/>
    <g fill="none" stroke="#2c96f4" stroke-linejoin="round"><path d="M10.800 13.200l9.800 7.600M11.400 22.200l9-11.300" stroke-width="2.200"/><path d="M21.300 9.400l1.700 13.600" stroke-width="2.600"/></g>
  </g>

  <g transform="translate(981.8 5.800)">
    <rect width="36.400" height="36.400" rx="3.500" fill="#45437f"/>
    <rect width="36.400" height="36.400" rx="3.500" fill="url(#tg2)"/>
    <rect x="0.500" y="0.500" width="35.400" height="35.400" rx="3" fill="none" stroke="#fff" stroke-opacity="0.100"/>
    <path d="M7 7.500l2.200 23.500q9 3 18 0l2.200-23.500z" fill="#9a9ac4" fill-opacity="0.300"/>
    <path d="M9.300 15c1-2 3-2.500 4.500-1.500c1.500-2 4-1.500 5 0c1.500-1.500 4-1.500 5 0.500c2 0 3 1.500 2.500 3l-1 12.500q-7.500 2.500-15 0l-1.500-12c-0.500-1 0-2 0.500-2.500z" fill="#e2e2e2"/>
    <path d="M13 16l3 2-2 4 3 3-2 4M21 15l-2 4 3 2-1 5 2 3M10.500 20l2 3M24.500 19l-1.500 4" fill="none" stroke="#b4b4b8" stroke-width="0.900"/>
    <path d="M11 14.500l3 1.500M18 13.500l2 2.500M23 15l1.500 2" fill="none" stroke="#fff" stroke-width="1.200"/>
    <ellipse cx="18.500" cy="6.500" rx="12" ry="3.300" fill="#cfcfd4"/>
    <ellipse cx="18.500" cy="6.300" rx="10.300" ry="2.100" fill="#9a9aac"/>
    <ellipse cx="18.500" cy="7.700" rx="9" ry="1.400" fill="#ececec"/>
  </g>

  <path d="M751.500 0h6l-3 3z" fill="#b0b0b8"/>
  <path d="M709 48l3-3.500 3 3.500z" fill="#e8e8e8"/><path d="M751.500 48l3-3.500 3 3.500z" fill="#e8e8e8"/>
  <rect x="62" y="46" width="1.500" height="2" fill="#e0e0e0"/><rect x="65" y="46" width="1.500" height="2" fill="#e0e0e0"/><rect x="68" y="46" width="1.500" height="2" fill="#e0e0e0"/>
</svg>
<!--/DOCKSVG-->
</div>
</body>
</html>
